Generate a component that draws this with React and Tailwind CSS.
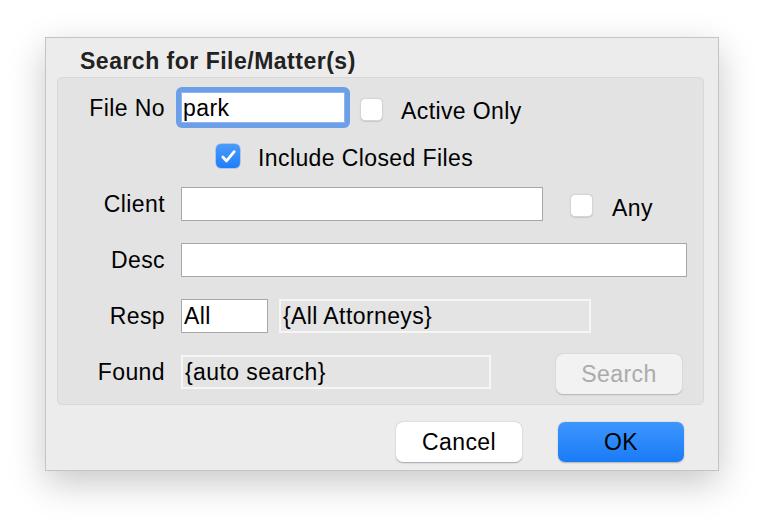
import React from 'react';

const CheckMark = () => (
  <svg viewBox="0 0 24 24" className="h-[21px] w-[21px]" fill="none">
    <path d="M5.5 12.5l4.3 4.6L18.5 6.5" stroke="white" strokeWidth="3.2" strokeLinecap="round" strokeLinejoin="round" />
  </svg>
);

const Checkbox = ({ checked, className = '' }) =>
  checked ? (
    <div className={`flex h-[24px] w-[24px] items-center justify-center rounded-[5px] bg-gradient-to-b from-[#4a9cfc] to-[#1a7ef9] shadow-[0_0_0_0.5px_rgba(0,80,200,0.4)] ${className}`}>
      <CheckMark />
    </div>
  ) : (
    <div className={`h-[23px] w-[23px] rounded-[5px] border border-[#d4d4d4] bg-white shadow-[0_0.5px_1px_rgba(0,0,0,0.12)] ${className}`} />
  );

const Label = ({ children }) => (
  <div className="w-[107px] text-right">{children}</div>
);

const TextBox = ({ value, className = '' }) => (
  <div className={`flex h-[34px] items-center border border-[#a8a8a8] bg-white pl-[2px] ${className}`}>
    {value}
  </div>
);

const ReadOnlyBox = ({ value, className = '' }) => (
  <div className={`flex h-[34px] items-center border-2 border-[#f6f6f6] bg-[#e4e4e4] pl-[2px] ${className}`}>
    {value}
  </div>
);

export default function App() {
  return (
    <div className="min-h-screen bg-white pl-[45px] pt-[37px] font-['Liberation_Sans',Arial,sans-serif] text-[23px] leading-[26px] tracking-[0.4px] text-black">
      <div className="flex h-[434px] w-[674px] flex-col border border-[#c4c4c4] bg-[#ececec] shadow-[0_12px_34px_rgba(0,0,0,0.22)]">
        <div className="ml-[34px] mt-[10px] font-bold tracking-[0.5px] text-[#222]">Search for File/Matter(s)</div>

        {/* search criteria group */}
        <div className="ml-[11px] mt-[3px] flex h-[328px] w-[647px] flex-col rounded-[5px] border border-[#d8d8d8] bg-[#e3e3e3]">
          <div className="mt-[9px] flex h-[41px] items-start">
            <div className="mt-[8px]"><Label>File No</Label></div>
            <div className="ml-[11px] h-[41px] w-[174px] rounded-[6px] bg-[#6c9fe8] p-[5px]">
              <div className="flex h-[31px] items-center border border-[#8fb5ee] bg-white pl-[1px]">park</div>
            </div>
            <Checkbox className="ml-[10px] mt-[11px]" />
            <div className="ml-[18px] mt-[11px]">Active Only</div>
          </div>

          <div className="mt-[16px] flex h-[24px] items-start">
            <Checkbox checked className="ml-[158px]" />
            <div className="ml-[18px] mt-[1px]">Include Closed Files</div>
          </div>

          <div className="mt-[19px] flex h-[34px] items-center">
            <Label>Client</Label>
            <TextBox className="ml-[16px] w-[362px]" />
            <Checkbox className="ml-[27px] mt-[2px]" />
            <div className="ml-[19px] mt-[8px]">Any</div>
          </div>

          <div className="mt-[22px] flex h-[34px] items-center">
            <Label>Desc</Label>
            <TextBox className="ml-[16px] w-[506px]" />
          </div>

          <div className="mt-[22px] flex h-[34px] items-center">
            <Label>Resp</Label>
            <TextBox value="All" className="ml-[16px] w-[87px]" />
            <ReadOnlyBox value="{All Attorneys}" className="ml-[11px] w-[312px]" />
          </div>

          <div className="mt-[22px] flex h-[34px] items-center">
            <Label>Found</Label>
            <ReadOnlyBox value="{auto search}" className="ml-[16px] w-[310px]" />
            <button className="ml-[65px] mt-[4px] flex h-[40px] w-[126px] items-center justify-center rounded-[7px] bg-[#f2f2f2] text-[#ababab] shadow-[0_0.5px_1.5px_rgba(0,0,0,0.22)]">
              Search
            </button>
          </div>
        </div>

        <div className="mt-[17px] flex justify-end gap-[36px] pr-[34px]">
          <button className="flex h-[40px] w-[126px] items-center justify-center rounded-[7px] bg-white shadow-[0_0.5px_1.5px_rgba(0,0,0,0.3)]">
            Cancel
          </button>
          <button className="flex h-[40px] w-[126px] items-center justify-center rounded-[7px] bg-gradient-to-b from-[#3c96fd] to-[#1a7bf7] shadow-[0_0.5px_1.5px_rgba(0,0,0,0.25)]">
            OK
          </button>
        </div>
      </div>
    </div>
  );
}
